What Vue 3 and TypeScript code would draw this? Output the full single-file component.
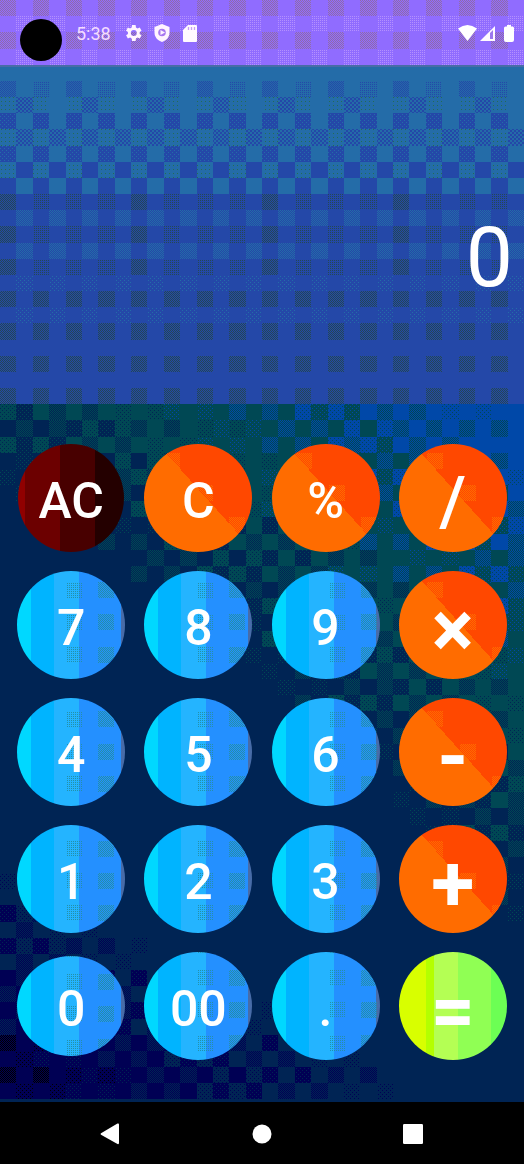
<script setup lang="ts">
interface Key { label: string; tone: 'number' | 'operator' | 'clear' | 'equals'; glyph: string }
interface Cell { x: number; y: number; w: number; h: number; fill: string }

const WIDTH = 524
const CELL_W = WIDTH / 32
const CELL_H = 1164 / 72

const tone = (label: string, t: Key['tone'], glyph = 'text'): Key => ({ label, tone: t, glyph })
const keys: Key[] = [
  tone('AC', 'clear'), tone('C', 'operator'), tone('%', 'operator'), tone('/', 'operator', 'slash'),
  tone('7', 'number'), tone('8', 'number'), tone('9', 'number'), tone('×', 'operator', 'times'),
  tone('4', 'number'), tone('5', 'number'), tone('6', 'number'), tone('-', 'operator', 'minus'),
  tone('1', 'number'), tone('2', 'number'), tone('3', 'number'), tone('+', 'operator', 'plus'),
  tone('0', 'number', 'zero'), tone('00', 'number'), tone('.', 'number'), tone('=', 'equals', 'equals'),
]

const inks: Record<string, string> = {
  blue: '#2448a8', teal: '#246ca8', olive: '#244854', green: '#246c54',
  black: '#000000', navy: '#000054', deep: '#002454', pine: '#004854', royal: '#0048a8',
  dim: '#906ca8', lilac: '#b490ff', sea: '#2490a8', ember: '#ff6c00',
}
const names = Object.keys(inks)
const ramp = ['black', 'navy', 'deep', 'pine', 'royal']

const cells: Cell[] = []
function put(c: number, r: number, fill: string) {
  const x = Math.round(c * CELL_W)
  const y = Math.round(r * CELL_H)
  cells.push({ x, y, w: Math.round((c + 1) * CELL_W) - x, h: Math.round((r + 1) * CELL_H) - y, fill })
}
const dither = (name: string, weight: string) => `url(#${name}-${weight})`

for (let r = 0; r < 4; r++) {
  for (let c = 0; c < 32; c++) {
    if (r % 2 === 0 && c % 2 === 0) put(c, r, dither('dim', 'dense'))
    if (r % 2 === 1 && c % 2 === 1) put(c, r, dither('lilac', 'medium'))
  }
}
for (let r = 4; r < 25; r++) {
  for (let c = 0; c < 32; c++) {
    const even = c % 2 === 0
    if (r >= 12) put(c, r, inks.blue)
    if (r === 5 && even) put(c, r, dither('blue', c % 4 === 0 ? 'dense' : 'medium'))
    if ((r === 6 || r === 8 || r === 10) && even) put(c, r, dither('green', 'sparse'))
    if (r === 6 && !even && c % 4 === 1) put(c, r, dither('blue', 'coarse'))
    if (r === 8 && !even) put(c, r, dither('blue', 'coarse'))
    if (r === 10 && !even) put(c, r, inks.blue)
    if ((r === 7 || r === 9 || r === 11) && even) {
      put(c, r, inks.blue)
      if (r < 11) put(c, r, dither('teal', 'light'))
    }
    if (r >= 12 && r % 2 === 0 && even) put(c, r, dither('olive', r >= 18 || c % 8 === 0 ? 'dense' : 'medium'))
    if ((r === 13 || r === 15) && !even) put(c, r, dither('teal', 'dense'))
    if ((r === 17 || r === 19) && !even) put(c, r, dither('teal', 'light'))
  }
}

const bayer = [[0, 8, 2, 10], [12, 4, 14, 6], [3, 11, 1, 9], [15, 7, 13, 5]]
for (let r = 25; r < 68; r++) {
  for (let c = 0; c < 32; c++) {
    const a = c / 31
    const b = (r - 25) / 43
    const high = 2.4 + 1.7 * a - (3.6 - 0.8 * a) * b
    const low = 2 - 4 * (b - 0.65) + 1.6 * a
    const level = high > 2 ? Math.min(high, 4) : Math.min(low, 2)
    if (level === 2) continue
    const shifted = level + (bayer[r % 4][c % 4] / 15 - 0.5) * 0.85
    const v = level > 2 ? Math.min(4, Math.max(2, shifted)) : Math.max(0, Math.min(2, shifted))
    const base = Math.round(v)
    if (base !== 2) put(c, r, inks[ramp[base]])
    const rest = v - base
    const next = ramp[base + Math.sign(rest)]
    if (next && Math.abs(rest) > 0.2) put(c, r, dither(next, Math.abs(rest) > 0.38 ? 'dense' : 'light'))
  }
}

function patches(index: number): Cell[] {
  const left = 17 + (index % 4) * 127
  const top = 444 + Math.floor(index / 4) * 127
  const operator = keys[index].tone === 'operator'
  const out: Cell[] = []
  for (let r = 28; r < 66; r += 2) {
    for (let c = 0; c < 32; c += 2) {
      const x = Math.round(c * CELL_W) - left
      const y = Math.round(r * CELL_H) - top
      if (y < -16 || y > 108) continue
      if (operator) {
        if (x - y > 0 && x - y < 36) out.push({ x, y, w: 16, h: 16, fill: dither('ember', 'dense') })
      } else if (x > 44 && x < 98) {
        out.push({ x, y, w: 16, h: 16, fill: dither('sea', x > 75 ? 'dense' : 'medium') })
      }
    }
  }
  return out
}
</script>

<template>
  <main class="phone">
    <svg class="texture" width="524" height="1164" viewBox="0 0 524 1164" shape-rendering="crispEdges" aria-hidden="true">
      <defs>
        <template v-for="name in names" :key="name">
          <pattern :id="`${name}-dense`" width="2" height="2" patternUnits="userSpaceOnUse">
            <path d="M0 0h1v1H0zM1 1h1v1H1z" :fill="inks[name]" />
          </pattern>
          <pattern :id="`${name}-medium`" width="2" height="2" patternUnits="userSpaceOnUse">
            <path d="M0 0h1v1H0z" :fill="inks[name]" />
          </pattern>
          <pattern :id="`${name}-light`" width="4" height="4" patternUnits="userSpaceOnUse">
            <path d="M0 0h1v1H0zM2 2h1v1H2z" :fill="inks[name]" />
          </pattern>
          <pattern :id="`${name}-sparse`" width="4" height="4" patternUnits="userSpaceOnUse">
            <path d="M1 1h1v1H1z" :fill="inks[name]" />
          </pattern>
          <pattern :id="`${name}-coarse`" width="4" height="4" patternUnits="userSpaceOnUse">
            <path d="M0 0h2v2H0zM2 2h2v2H2z" :fill="inks[name]" />
          </pattern>
        </template>
      </defs>
      <rect width="524" height="66" fill="#906cff" />
      <rect y="66" width="524" height="338" fill="#246ca8" />
      <rect y="404" width="524" height="698" fill="#002454" />
      <rect v-for="(cell, i) in cells" :key="i" :x="cell.x" :y="cell.y" :width="cell.w" :height="cell.h" :fill="cell.fill" />
      <rect y="65" width="524" height="2" fill="#486ca8" />
    </svg>

    <header class="status">
      <span class="camera"></span>
      <span class="clock">5:38</span>
      <svg class="gear" width="18" height="18" viewBox="2 2 20 20" fill="#fff4ff">
        <path fill-rule="evenodd" d="M19.4 13a7.5 7.5 0 0 0 0-2l2.1-1.6-2-3.5-2.5 1a7.700 7.700 0 0 0-1.700-1L14.900 3.200h-4l-.4 2.700a7.700 7.700 0 0 0-1.700 1l-2.500-1-2 3.500L6.400 11a7.500 7.500 0 0 0 0 2l-2.100 1.600 2 3.500 2.500-1a7.700 7.700 0 0 0 1.700 1l.4 2.700h4l.4-2.700a7.700 7.700 0 0 0 1.700-1l2.500 1 2-3.500zM12.900 8.700a3.300 3.300 0 1 1 0 6.600 3.300 3.300 0 0 1 0-6.600z" />
      </svg>
      <svg class="shield" width="16" height="18" viewBox="0 0 16 18">
        <path d="M8 0l7.500 3v5.500c0 4.500-3 8-7.500 9.500-4.500-1.500-7.500-5-7.500-9.500V3z" fill="#fff4ff" />
        <circle cx="8" cy="8.500" r="3.800" fill="#a878f0" />
        <path d="M6.500 6l4.500 2.500L6.500 11z" fill="#fff4ff" />
      </svg>
      <svg class="card" width="14" height="17" viewBox="0 0 14 17">
        <path d="M5 0h8q1 0 1 1v15q0 1-1 1H1q-1 0-1-1V5z" fill="#fffaff" />
        <path d="M5.500 2v3M8.500 2v3M11.500 2v3" stroke="#c8a0f4" stroke-width="1.300" />
      </svg>
      <svg class="wifi" width="19" height="16" viewBox="0 0 19 16"><path d="M0 3.500Q9.500-3.500 19 3.500L9.500 16z" fill="#fff" /></svg>
      <svg class="signal" width="15" height="15" viewBox="0 0 15 15">
        <path d="M0 15L15 0v15z" fill="#fffaff" /><path d="M10 7l3-3v9h-3z" fill="#9c78ee" />
      </svg>
      <svg class="battery" width="10" height="17" viewBox="0 0 10 17"><path d="M3 0h4v1.500h1.500q1.500 0 1.500 1.500v12q0 2-2 2H2q-2 0-2-2V3q0-1.500 1.500-1.500H3z" fill="#fff" /></svg>
    </header>

    <section class="display"><output>0</output></section>

    <section class="keypad">
      <button v-for="(key, i) in keys" :key="key.label" class="key" :class="[key.tone, `is-${key.glyph}`]" type="button">
        <svg v-if="key.tone === 'number' || key.tone === 'operator'" class="grain" width="108" height="108" shape-rendering="crispEdges" aria-hidden="true">
          <rect v-for="(p, n) in patches(i)" :key="n" :x="p.x" :y="p.y" :width="p.w" :height="p.h" :fill="p.fill" />
        </svg>
        <span class="label">{{ key.label }}</span>
      </button>
    </section>

    <nav class="navigation">
      <svg width="20" height="22" viewBox="0 0 20 22"><path d="M1 10.200L17.500.5q1.500-.5 1.500 1v18.500q0 1.500-1.500 1L1 11.800q-1-.8 0-1.600z" fill="#fff" /></svg>
      <svg width="20" height="20" viewBox="0 0 20 20"><circle cx="10" cy="10" r="9.500" fill="#fff" /></svg>
      <svg width="20" height="20" viewBox="0 0 20 20"><rect width="20" height="20" rx="1.200" fill="#fff" /></svg>
    </nav>
  </main>
</template>

<style>
body { margin: 0; background: #000; }
</style>

<style scoped>
.phone {
  position: relative;
  display: flex;
  flex-direction: column;
  width: 524px;
  height: 1164px;
  overflow: hidden;
  color: #fff;
  font-family: Roboto, "Liberation Sans", sans-serif;
}
.texture { position: absolute; inset: 0; }
.status, .display, .keypad, .navigation { position: relative; }
.status {
  box-sizing: border-box;
  display: flex;
  align-items: flex-start;
  height: 66px;
  padding: 19px 10px 0 20px;
}
.status svg { flex: none; display: block; }
.camera { width: 42px; height: 42px; border-radius: 50%; background: #000; }
.clock { width: 48px; margin: 5px 0 0 14px; font-size: 18px; line-height: 20px; color: #f4dcff; }
.gear { margin-top: 5px; }
.shield { margin: 5px 0 0 12px; }
.card { margin: 6px 0 0 13px; }
.wifi { margin: 6px 0 0 auto; }
.signal { margin: 7px 0 0 3px; }
.battery { margin: 6px 0 0 9px; }
.display {
  box-sizing: border-box;
  display: flex;
  justify-content: flex-end;
  height: 338px;
  padding: 143px 11px 0 0;
}
.display output { font-size: 84px; line-height: 98px; }
.keypad {
  box-sizing: border-box;
  display: grid;
  grid-template-columns: repeat(4, 108px);
  grid-auto-rows: 108px;
  gap: 19px 19.200px;
  height: 698px;
  padding: 40px 0 0 17.200px;
  align-items: center;
}
.key {
  position: relative;
  display: flex;
  align-items: center;
  justify-content: center;
  width: 108px;
  height: 108px;
  padding: 0;
  border: 0;
  border-radius: 50%;
  overflow: hidden;
  color: #fff;
  font: 500 50px/58px Roboto, "Liberation Sans", sans-serif;
}
.grain { position: absolute; inset: 0; }
.label { position: relative; transform: translateY(3px); }
.number { background: linear-gradient(90deg, #00d8ff 13%, #00b4ff 13% 34%, #24b4ff 34% 57%, #2490ff 57% 96%, #486ca8 96%); }
.operator { background: linear-gradient(48deg, #ff9000 7%, #ff6c00 7% 54%, #ff4800 54%); }
.clear { width: 106px; justify-self: center; background: linear-gradient(90deg, #900000 7%, #6c0000 7% 40%, #480000 40% 73%, #240000 73%); }
.equals { background: linear-gradient(90deg, #d8ff00 25%, #b4ff00 25% 32%, #b4ff54 32% 55%, #90ff54 55% 85%, #6cff54 85%); }
.is-zero { height: 100px; }
.is-slash { font-size: 69px; }
.is-slash .label { transform: translateY(4px); }
.is-times, .is-plus, .is-minus, .is-equals { font-size: 79px; font-weight: 700; }
.is-times .label, .is-plus .label, .is-minus .label, .is-equals .label { transform: translateY(5px); }
.is-equals { font-size: 77px; }
.navigation {
  box-sizing: border-box;
  display: grid;
  grid-template-columns: 20px 20px 20px;
  justify-content: space-between;
  align-items: center;
  height: 62px;
  padding: 1px 101px 0 100px;
  background: #000;
}
.navigation svg { display: block; }
</style>
